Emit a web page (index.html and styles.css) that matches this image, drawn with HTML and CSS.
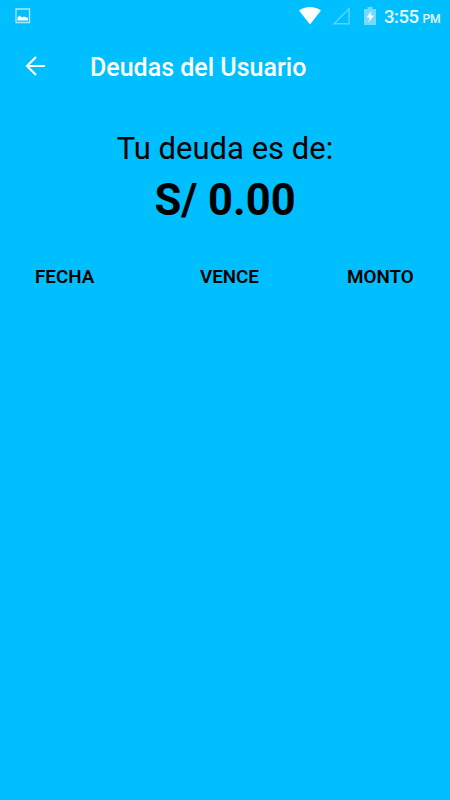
FILE: index.html
```html
<!DOCTYPE html>
<html lang="es">
<head>
  <meta charset="UTF-8" />
  <meta name="viewport" content="width=device-width, initial-scale=1" />
  <title>Deudas del Usuario</title>
  <link rel="stylesheet" href="styles.css">
</head>
<body>
  <div class="status-bar">
    <svg class="icon-image" viewBox="0 0 16 16">
      <path fill="none" stroke="#a6e9ff" stroke-width="1.3" d="M1 1h13.500v13.500H1z" />
      <path fill="#fff" d="M2.500 12.500V9.500L4.500 7.500 7 9.500l2-1 4 1.500v2.500z" />
    </svg>
    <div class="status-right">
      <svg class="icon-wifi" viewBox="0 0 22 18">
        <path fill="#fff" d="M11 17.500L0 3.600C3 1.300 7 0 11 0s8 1.300 11 3.600z" />
      </svg>
      <svg class="icon-signal" viewBox="0 0 18 18">
        <path fill="none" stroke="#59d4ff" stroke-width="1.500" d="M17 1.800v15H2z" />
      </svg>
      <svg class="icon-battery" viewBox="0 0 12 18">
        <path fill="#73dbff" d="M3.500 0h5v2H12v16H0V2h3.500z" />
        <path fill="#fff" d="M7.500 4L2.500 10.500H5.500L4.500 15.500L10 8.500H6.800z" />
      </svg>
      <span class="clock">3:55 <small>PM</small></span>
    </div>
  </div>

  <header class="app-bar">
    <svg class="icon-back" viewBox="0 0 20 20">
      <path fill="none" stroke="#fff" stroke-width="2.200" d="M20 10H2M11 1L2 10l9 9" />
    </svg>
    <h1>Deudas del Usuario</h1>
  </header>

  <main>
    <p class="debt-label">Tu deuda es de:</p>
    <p class="debt-amount">S/ 0.00</p>
    <div class="table-head">
      <span>FECHA</span>
      <span>VENCE</span>
      <span>MONTO</span>
    </div>
  </main>
</body>
</html>
```
FILE: styles.css
```css
* {
  box-sizing: border-box;
}

body {
  margin: 0;
  min-height: 100vh;
  font-family: Roboto, sans-serif;
  background: #00bfff;
  color: #000;
}

svg {
  display: block;
}

.status-bar {
  display: flex;
  justify-content: space-between;
  height: 34px;
  padding: 7px 10px 0 15px;
  color: #e6f9ff;
}

.icon-image {
  width: 16px;
  height: 16px;
  margin-top: 1px;
}

.status-right {
  display: flex;
}

.icon-wifi {
  width: 22px;
  height: 18px;
}

.icon-signal {
  width: 18px;
  height: 18px;
  margin-left: 11px;
}

.icon-battery {
  width: 12px;
  height: 18px;
  margin-left: 14px;
}

.clock {
  width: 56px;
  margin-left: 8px;
  font-size: 18.5px;
  font-weight: 500;
  line-height: 20px;
  letter-spacing: -0.5px;
  white-space: nowrap;
}

.clock small {
  font-size: 12.2px;
  letter-spacing: -0.4px;
}

.app-bar {
  display: flex;
  align-items: center;
  height: 66px;
  padding-left: 25px;
  color: #fff;
}

.icon-back {
  width: 20px;
  height: 20px;
  margin-top: -2px;
}

h1 {
  margin: 1px 0 0 45px;
  font-size: 25px;
  font-weight: 500;
}

main {
  padding-top: 28px;
}

.debt-label,
.debt-amount {
  margin: 0;
  text-align: center;
}

.debt-label {
  font-size: 31px;
  line-height: 42px;
}

.debt-amount {
  font-size: 43.5px;
  font-weight: 700;
  line-height: 61px;
}

.table-head {
  display: grid;
  grid-template-columns: 165px 147px auto;
  padding: 35px 0 0 35px;
  font-size: 18.8px;
  font-weight: 600;
  line-height: 22px;
}
```
